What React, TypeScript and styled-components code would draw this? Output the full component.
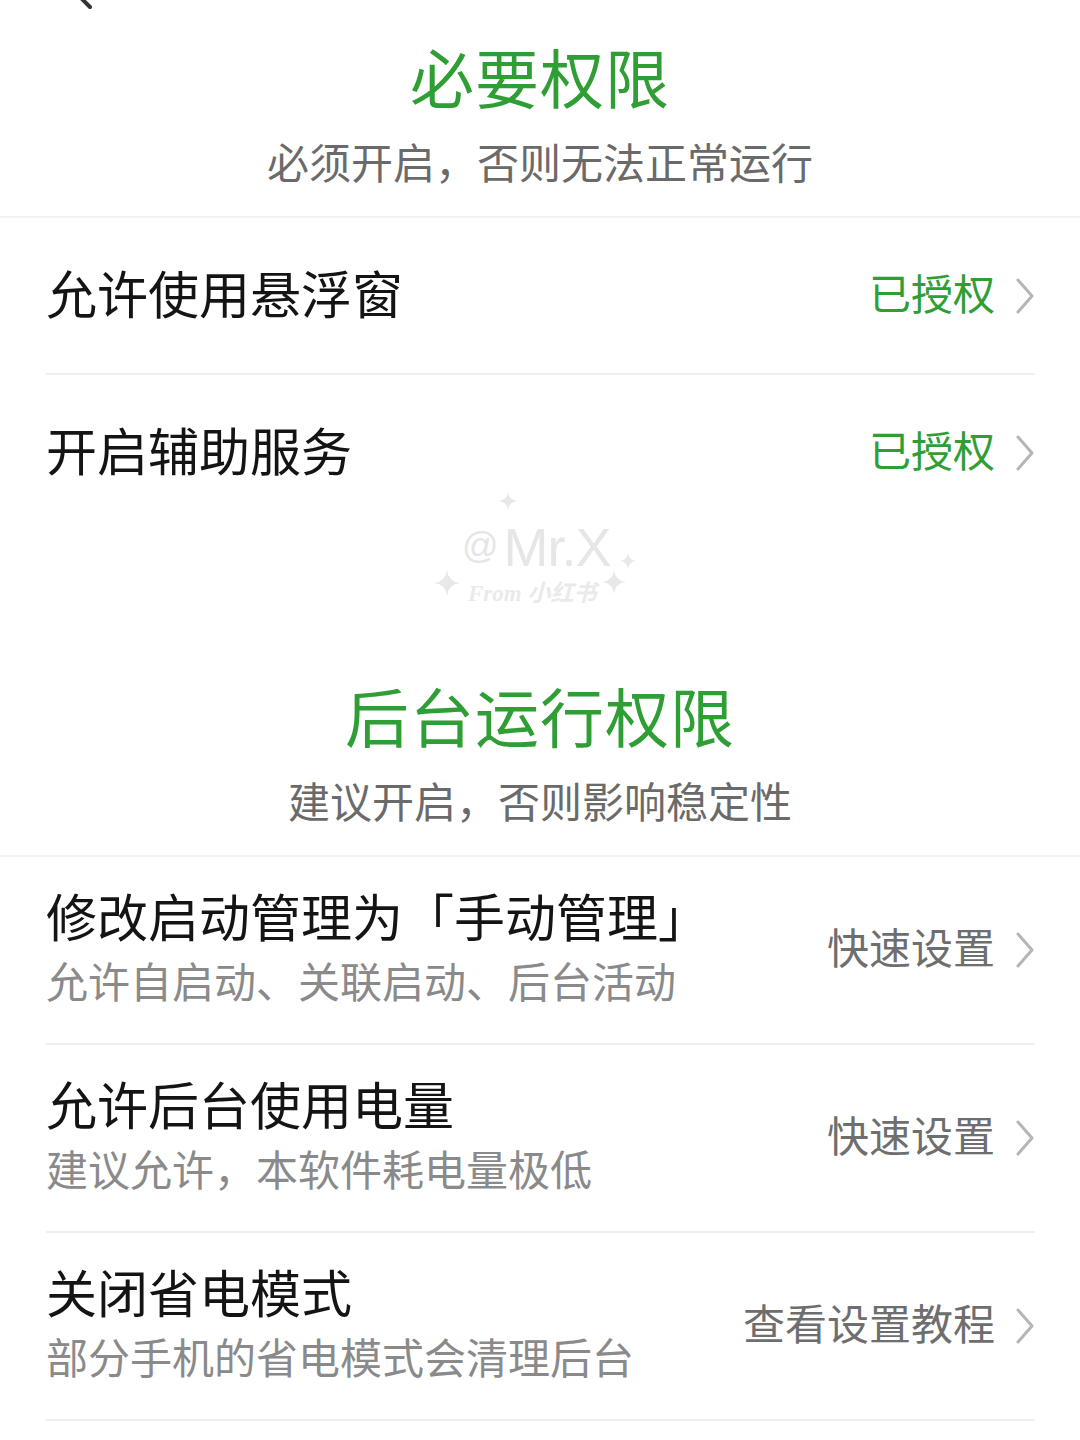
import styled, { createGlobalStyle } from "styled-components";

const GREEN = "#2f9e35";

const GlobalStyle = createGlobalStyle`
  html, body {
    margin: 0;
    padding: 0;
    background: #ffffff;
  }
  body {
    font-family: "Noto Sans CJK SC", "Noto Sans", sans-serif;
    -webkit-font-smoothing: antialiased;
  }
  * {
    box-sizing: border-box;
  }
`;

interface PermissionItem {
  title: string;
  desc?: string;
  action: string;
  granted?: boolean;
}

const required: PermissionItem[] = [
  { title: "允许使用悬浮窗", action: "已授权", granted: true },
  { title: "开启辅助服务", action: "已授权", granted: true },
];

const background: PermissionItem[] = [
  { title: "修改启动管理为「手动管理」", desc: "允许自启动、关联启动、后台活动", action: "快速设置" },
  { title: "允许后台使用电量", desc: "建议允许，本软件耗电量极低", action: "快速设置" },
  { title: "关闭省电模式", desc: "部分手机的省电模式会清理后台", action: "查看设置教程" },
];

const Chevron = () => (
  <svg width="20" height="38" viewBox="0 0 20 38" fill="none">
    <path d="M3 3 L17 19 L3 35" stroke="#b5b5b5" strokeWidth="3" strokeLinecap="round" strokeLinejoin="round" />
  </svg>
);

const Sparkle = ({ size }: { size: number }) => (
  <svg width={size} height={size} viewBox="0 0 20 20">
    <path d="M10 0 Q11 9 20 10 Q11 11 10 20 Q9 11 0 10 Q9 9 10 0 Z" fill="#e8e8e8" />
  </svg>
);

const PermissionRow = ({ item, last }: { item: PermissionItem; last?: boolean }) => (
  <Row $twoLine={!!item.desc} $last={last}>
    <RowText>
      <RowTitle>{item.title}</RowTitle>
      {item.desc && <RowDesc>{item.desc}</RowDesc>}
    </RowText>
    <RowAction>
      <ActionLabel $granted={item.granted}>{item.action}</ActionLabel>
      <Chevron />
    </RowAction>
  </Row>
);

const App = () => {
  return (
    <Page>
      <GlobalStyle />
      <BackButton>
        <svg width="40" height="60" viewBox="0 0 40 60" fill="none">
          <path d="M34 4 L14 24 L34 44" stroke="#333" strokeWidth="4" strokeLinecap="round" strokeLinejoin="round" />
        </svg>
      </BackButton>

      <Section>
        <Header $top={35}>
          <Title>必要权限</Title>
          <Subtitle>必须开启，否则无法正常运行</Subtitle>
        </Header>
        <List>
          {required.map((item, i) => (
            <PermissionRow key={item.title} item={item} last={i === required.length - 1} />
          ))}
        </List>
        <Watermark>
          <SparkleTop><Sparkle size={18} /></SparkleTop>
          <MarkLine>
            <At>@</At>Mr.X
          </MarkLine>
          <SparkleRight><Sparkle size={16} /></SparkleRight>
          <SparkleLeft><Sparkle size={26} /></SparkleLeft>
          <SparkleLow><Sparkle size={24} /></SparkleLow>
          <From>From 小红书</From>
        </Watermark>
      </Section>

      <Section>
        <Header $top={142}>
          <Title>后台运行权限</Title>
          <Subtitle>建议开启，否则影响稳定性</Subtitle>
        </Header>
        <List>
          {background.map((item) => (
            <PermissionRow key={item.title} item={item} />
          ))}
        </List>
      </Section>
    </Page>
  );
};

const Page = styled.div`
  position: relative;
  width: 1080px;
  height: 1440px;
  overflow: hidden;
  background: #ffffff;
`;

const BackButton = styled.div`
  position: absolute;
  left: 56px;
  top: -37px;
`;

const Section = styled.section`
  position: relative;
`;

const Header = styled.div<{ $top: number }>`
  display: flex;
  flex-direction: column;
  align-items: center;
  gap: 18px;
  padding: ${({ $top }) => $top}px 0 27px;
  border-bottom: 2px solid #f2f2f2;
`;

const Title = styled.h1`
  margin: 0;
  font-size: 64px;
  line-height: 80px;
  font-weight: 400;
  letter-spacing: 1px;
  color: ${GREEN};
`;

const Subtitle = styled.p`
  margin: 0;
  font-size: 42px;
  line-height: 56px;
  color: #6a6a6a;
`;

const List = styled.div`
  display: flex;
  flex-direction: column;
  padding: 0 45px 0 46px;
`;

const Row = styled.div<{ $twoLine: boolean; $last?: boolean }>`
  display: flex;
  align-items: center;
  justify-content: space-between;
  height: ${({ $twoLine }) => ($twoLine ? 188 : 157)}px;
  border-bottom: 2px solid ${({ $last }) => ($last ? "transparent" : "#efefef")};
`;

const RowText = styled.div`
  display: flex;
  flex-direction: column;
  gap: 7px;
  padding-bottom: 8px;
`;

const RowTitle = styled.div`
  font-size: 51px;
  line-height: 60px;
  color: #141414;
`;

const RowDesc = styled.div`
  font-size: 42px;
  line-height: 56px;
  color: #8a8a8a;
`;

const RowAction = styled.div`
  display: flex;
  align-items: center;
  gap: 20px;
`;

const ActionLabel = styled.span<{ $granted?: boolean }>`
  font-size: 42px;
  line-height: 56px;
  padding-bottom: 8px;
  color: ${({ $granted }) => ($granted ? GREEN : "#6e6e6e")};
`;

const Watermark = styled.div`
  position: absolute;
  left: 430px;
  top: 490px;
  width: 220px;
  height: 125px;
  pointer-events: none;
`;

const MarkLine = styled.div`
  position: absolute;
  left: 32px;
  top: 26px;
  font-family: "Liberation Sans", Arial, sans-serif;
  font-size: 54px;
  line-height: 60px;
  color: #e6e6e6;
  letter-spacing: -1px;
`;

const At = styled.span`
  font-size: 36px;
  margin-right: 6px;
  vertical-align: 8px;
`;

const From = styled.div`
  position: absolute;
  left: 38px;
  top: 90px;
  font-family: "Liberation Serif", "Noto Sans CJK SC", serif;
  font-style: italic;
  font-weight: 700;
  font-size: 23px;
  line-height: 28px;
  color: #eaeaea;
`;

const SparkleTop = styled.div`
  position: absolute;
  left: 69px;
  top: 1px;
`;

const SparkleRight = styled.div`
  position: absolute;
  left: 190px;
  top: 60px;
`;

const SparkleLeft = styled.div`
  position: absolute;
  left: 4px;
  top: 80px;
`;

const SparkleLow = styled.div`
  position: absolute;
  left: 172px;
  top: 80px;
`;

export default App;
